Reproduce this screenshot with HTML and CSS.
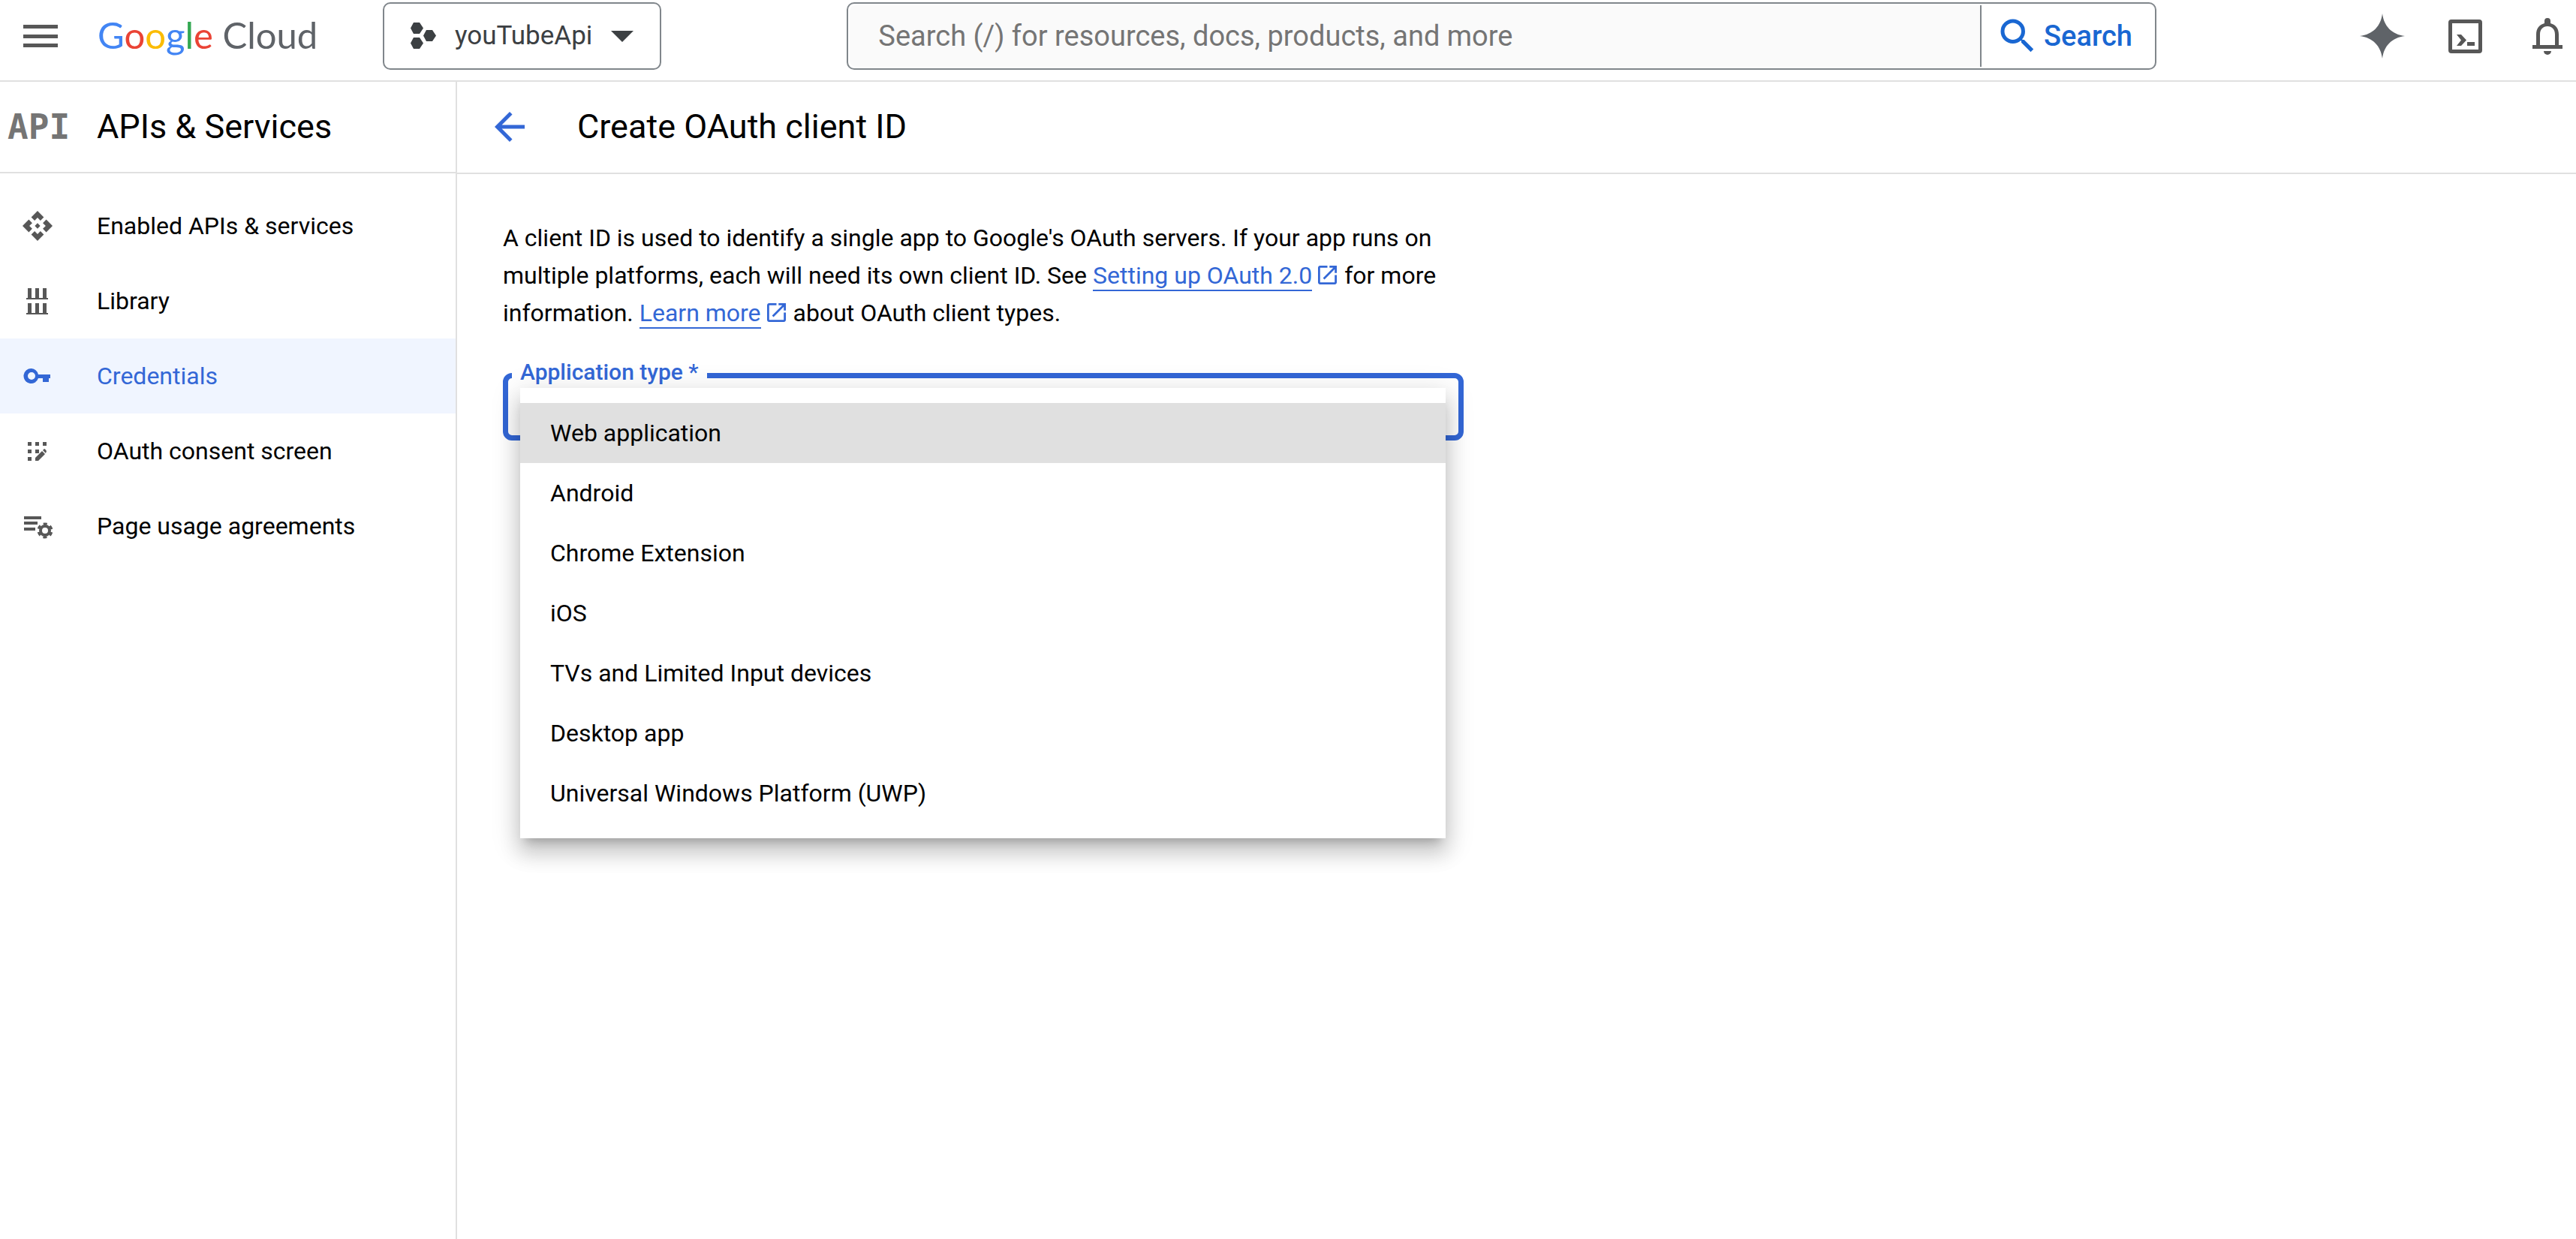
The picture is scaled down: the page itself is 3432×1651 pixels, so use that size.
FILE: index.html
```html
<!DOCTYPE html>
<html lang="en">
<head>
<meta charset="utf-8">
<title>Create OAuth client ID – APIs &amp; Services</title>
<link rel="stylesheet" href="styles.css">
</head>
<body>
<header class="topbar">
  <button class="icon-button" type="button" aria-label="Main menu">
    <svg class="icon" viewBox="0 0 60 60"><path d="M7 15h46v5H7zM7 28h46v5H7zM7 40h46v5H7z"/></svg>
  </button>
  <a class="brand" href="#" aria-label="Google Cloud"><span class="blue">G</span><span class="red">o</span><span class="yellow">o</span><span class="blue">g</span><span class="green">l</span><span class="red">e</span> <span class="cloud">Cloud</span></a>
  <button class="project" type="button">
    <svg class="project-icon" viewBox="0 0 34 36"><path d="M4 0h8l5 7.500-5 7.500H4L0 7.500zM4 20h8l5 7.500-5 7.500H4l-4-7.500zM21 10h8l5 7.500-5 7.500h-8l-4-7.500z"/></svg>
    <span>youTubeApi</span>
    <svg class="project-arrow" viewBox="0 0 30 15"><path d="M0 0h30L15 15z"/></svg>
  </button>
  <form class="search" role="search">
    <input class="search-input" type="text" aria-label="Search" placeholder="Search (/) for resources, docs, products, and more">
    <button class="search-button" type="button">
      <svg class="icon" viewBox="0 0 24 24"><path d="M15.500 14h-.79l-.28-.27A6.471 6.471 0 0 0 16 9.500 6.500 6.500 0 1 0 9.500 16c1.610 0 3.090-.59 4.230-1.570l.27.280v.79l5 4.990L20.490 19l-4.990-5zm-6 0C7.010 14 5 11.990 5 9.500S7.010 5 9.500 5 14 7.010 14 9.500 11.990 14 9.500 14z"/></svg>
      Search
    </button>
  </form>
  <nav class="tools" aria-label="Tools">
    <button class="icon-button" type="button" aria-label="Gemini">
      <svg class="icon sparkle" viewBox="0 0 60 60"><path d="M30 0C32 17 43 28 60 30 43 32 32 43 30 60 28 43 17 32 0 30 17 28 28 17 30 0z"/></svg>
    </button>
    <button class="icon-button" type="button" aria-label="Activate Cloud Shell">
      <svg class="icon" viewBox="0 0 60 60"><path fill-rule="evenodd" d="M12 8h37a4 4 0 0 1 4 4v37a4 4 0 0 1-4 4H12a4 4 0 0 1-4-4V12a4 4 0 0 1 4-4zm1 5v35h35V13z"/><path d="M19 28h6l7 7.500-7 7.500h-6l6-7.500zM33 38h10v5H33z"/></svg>
    </button>
    <button class="icon-button" type="button" aria-label="Notifications">
      <svg class="icon" viewBox="0 0 60 60"><path fill-rule="evenodd" d="M10 42h5V28c0-8 4-13 11-15v-3a4 4 0 0 1 8 0v3c7 2 11 7 11 15v14h5v5H10zm10 0h20V28c0-7-4-11-10-11s-10 4-10 11z"/><path d="M25 50h10a5 5 0 0 1-10 0z"/></svg>
    </button>
  </nav>
</header>

<div class="shell">
  <aside class="sidebar">
    <div class="sidebar-head">
      <span class="api-mark" aria-hidden="true">API</span>
      <h2 class="title">APIs &amp; Services</h2>
    </div>
    <nav class="nav" aria-label="APIs and services">
      <a class="nav-link" href="#">
        <svg class="nav-icon" viewBox="1 1 22 22"><path d="M14 12l-2 2-2-2 2-2 2 2zm-2-6l2.120 2.120 2.500-2.500L12 1 7.380 5.620l2.500 2.500L12 6zm-6 6l2.120-2.120-2.500-2.500L1 12l4.620 4.620 2.500-2.500L6 12zm12 0l-2.120 2.120 2.500 2.500L23 12l-4.620-4.620-2.500 2.500L18 12zm-6 6l-2.120-2.120-2.500 2.500L12 23l4.620-4.620-2.500-2.500L12 18z"/></svg>
        Enabled APIs &amp; services
      </a>
      <a class="nav-link" href="#">
        <svg class="nav-icon" viewBox="0 0 40 40"><path d="M7 3h5v13h5V3h5v13h5V3h5v13h2v2H5v-2h2zM7 23h5v13h5V23h5v13h5V23h5v13h2v2H5v-2h2z"/></svg>
        Library
      </a>
      <a class="nav-link selected" href="#" aria-current="page">
        <svg class="nav-icon" viewBox="0 0 40 40"><path fill-rule="evenodd" d="M12 10a10 10 0 0 1 9 8h16v5h-2v5h-8v-5h-6a10 10 0 1 1-9-13zm0 5a5 5 0 1 0 0 10 5 5 0 0 0 0-10z"/></svg>
        Credentials
      </a>
      <a class="nav-link" href="#">
        <svg class="nav-icon" viewBox="0 0 40 40"><path d="M7 8h5v5H7zM17 8h5v5h-5zM27 8h5v5h-5zM7 18h5v5H7zM17 18h5v5h-5zM7 28h5v5H7zM17 33v-4l9-9 4 4-9 9zM27 19l2-2q1 0 3 3l-1 3z"/></svg>
        OAuth consent screen
      </a>
      <a class="nav-link" href="#">
        <svg class="nav-icon" viewBox="0 0 40 40"><path d="M2 7h23v4H2zM2 14h18v4H2zM2 22h15v4H2z"/><circle cx="30" cy="26" r="6" fill="none" stroke="currentColor" stroke-width="4"/><circle cx="30" cy="26" r="9" fill="none" stroke="currentColor" stroke-width="3" stroke-dasharray="5 4.425" transform="rotate(14 30 26)"/></svg>
        Page usage agreements
      </a>
    </nav>
  </aside>

  <main class="main">
    <div class="main-head">
      <a class="back" href="#" aria-label="Back">
        <svg class="icon" viewBox="0 0 24 24"><path d="M20 11H7.830l5.590-5.590L12 4l-8 8 8 8 1.410-1.410L7.830 13H20v-2z"/></svg>
      </a>
      <h1 class="title">Create OAuth client ID</h1>
    </div>
    <div class="content">
      <p class="intro">A client ID is used to identify a single app to Google's OAuth servers. If your app runs on multiple platforms, each will need its own client ID. See <a class="link" href="#"><span class="link-text">Setting up OAuth 2.0</span><svg class="link-icon" viewBox="3 3 18 18"><path d="M19 19H5V5h7V3H5c-1.110 0-2 .9-2 2v14c0 1.100.89 2 2 2h14c1.100 0 2-.9 2-2v-7h-2v7zM14 3v2h3.590l-9.830 9.830 1.410 1.410L19 6.410V10h2V3h-7z"/></svg></a> for more information. <a class="link" href="#"><span class="link-text">Learn more</span><svg class="link-icon" viewBox="3 3 18 18"><path d="M19 19H5V5h7V3H5c-1.110 0-2 .9-2 2v14c0 1.100.89 2 2 2h14c1.100 0 2-.9 2-2v-7h-2v7zM14 3v2h3.590l-9.830 9.830 1.410 1.410L19 6.410V10h2V3h-7z"/></svg></a> about OAuth client types.</p>
      <div class="field">
        <fieldset class="outline">
          <legend class="legend"><label for="app-type">Application type *</label></legend>
          <select class="select" id="app-type" required>
            <option value=""></option>
            <option>Web application</option>
            <option>Android</option>
            <option>Chrome Extension</option>
            <option>iOS</option>
            <option>TVs and Limited Input devices</option>
            <option>Desktop app</option>
            <option>Universal Windows Platform (UWP)</option>
          </select>
        </fieldset>
        <ul class="menu" role="listbox" aria-label="Application type">
          <li class="option active" role="option" aria-selected="true">Web application</li>
          <li class="option" role="option">Android</li>
          <li class="option" role="option">Chrome Extension</li>
          <li class="option" role="option">iOS</li>
          <li class="option" role="option">TVs and Limited Input devices</li>
          <li class="option" role="option">Desktop app</li>
          <li class="option" role="option">Universal Windows Platform (UWP)</li>
        </ul>
      </div>
    </div>
  </main>
</div>
</body>
</html>
```
FILE: styles.css
```css
* {
  box-sizing: border-box;
}

body {
  margin: 0;
  min-height: 100vh;
  display: flex;
  flex-direction: column;
  background: #fff;
  color: #000;
  font-family: Roboto, "Liberation Sans", sans-serif;
  font-size: 32px;
  line-height: 50px;
}

button,
input,
select {
  font: inherit;
}

button {
  margin: 0;
  padding: 0;
  border: 0;
  background: none;
}

a {
  text-decoration: none;
}

svg {
  display: block;
  flex: none;
  fill: currentColor;
}

.icon {
  width: 60px;
  height: 60px;
}

/* Top bar */
.topbar {
  display: flex;
  align-items: flex-start;
  padding: 3px 8px 14px 24px;
  border-bottom: 2px solid #e0e0e0;
}

.icon-button {
  display: flex;
  align-items: center;
  height: 90px;
  color: #575757;
}

.brand {
  width: 380px;
  margin-left: 46px;
  font-family: Lato, sans-serif;
  font-size: 49px;
  line-height: 86px;
  white-space: nowrap;
}

.blue { color: #4285f4; }
.red { color: #ea4335; }
.yellow { color: #fbbc04; }
.green { color: #34a853; }
.cloud { color: #5f6368; }

.project {
  display: flex;
  align-items: center;
  height: 90px;
  padding: 0 35px;
  border: 2px solid #80868b;
  border-radius: 10px;
  color: #3c4043;
  font-size: 35px;
}

.project-icon {
  width: 34px;
  height: 36px;
  margin-right: 25px;
}

.project-arrow {
  width: 30px;
  height: 15px;
  margin-left: 25px;
}

.search {
  display: flex;
  flex: 1;
  height: 90px;
  margin: 0 271px 0 247px;
  padding: 2px;
  border: 2px solid #80868b;
  border-radius: 10px;
  font-size: 38px;
}

.search-input {
  flex: 1;
  min-width: 0;
  padding: 0 38px;
  border: 0;
  border-radius: 8px 0 0 8px;
  background: #fafafa;
  color: #3c4043;
}

.search-input::placeholder {
  color: #757575;
  opacity: 1;
}

.search-button {
  display: flex;
  align-items: center;
  gap: 5px;
  padding: 0 28px 0 18px;
  border-left: 2px solid #80868b;
  color: #1967d2;
  font-weight: 500;
}

.tools {
  display: flex;
  gap: 50px;
}

.sparkle {
  color: #5f6368;
}

/* Page shell */
.shell {
  display: flex;
  flex: 1;
}

.sidebar {
  width: 609px;
  flex: none;
  border-right: 2px solid #e0e0e0;
}

.title {
  margin: 0;
  font-size: 45px;
  font-weight: 400;
  line-height: 120px;
}

.sidebar-head {
  display: flex;
  align-items: center;
  padding-left: 10px;
  border-bottom: 2px solid #e0e0e0;
}

.api-mark {
  width: 119px;
  color: #757575;
  font-family: "DejaVu Sans Mono", monospace;
  font-size: 46px;
  font-weight: 700;
}

.nav {
  padding-top: 20px;
}

.nav-link {
  display: flex;
  align-items: center;
  gap: 59px;
  height: 100px;
  padding-left: 30px;
  color: #000;
}

.nav-icon {
  width: 40px;
  height: 40px;
  color: #575757;
}

.selected,
.selected .nav-icon {
  color: #3367d6;
}

.selected {
  background: #f0f5ff;
}

/* Main column */
.main {
  flex: 1;
  min-width: 0;
}

.main-head {
  display: flex;
  align-items: center;
  gap: 60px;
  padding: 0 40px 1px;
  border-bottom: 2px solid #e0e0e0;
}

.back {
  color: #3367d6;
}

.content {
  max-width: 1341px;
  padding: 60px 0 0 61px;
}

.intro {
  margin: 0 0 36px;
}

.link {
  color: #3367d6;
}

.link-text {
  border-bottom: 2px solid #3367d6;
}

.link-icon {
  display: inline-block;
  width: 25px;
  height: 25px;
  margin: 0 2px 0 8px;
  vertical-align: -1px;
}

.field {
  position: relative;
}

.outline {
  min-width: 0;
  margin: 0;
  padding: 0 5px;
  border: 7px solid #3367d6;
  border-radius: 12px;
}

.legend {
  padding: 0 11px 8px;
  color: #3367d6;
  font-size: 30px;
  font-weight: 500;
  line-height: 36px;
}

.select {
  display: block;
  width: 100%;
  height: 58px;
  border: 0;
  outline: 0;
  appearance: none;
  background: transparent;
}

.menu {
  position: absolute;
  top: 39px;
  left: 23px;
  right: 24px;
  margin: 0;
  padding: 20px 0;
  background: #fff;
  box-shadow:
    0 12px 12px -8px rgba(0, 0, 0, 0.2),
    0 20px 25px 2px rgba(0, 0, 0, 0.14),
    0 8px 35px 5px rgba(0, 0, 0, 0.12);
  list-style: none;
}

.option {
  padding: 0 40px;
  line-height: 80px;
}

.active {
  background: #e0e0e0;
}
```
